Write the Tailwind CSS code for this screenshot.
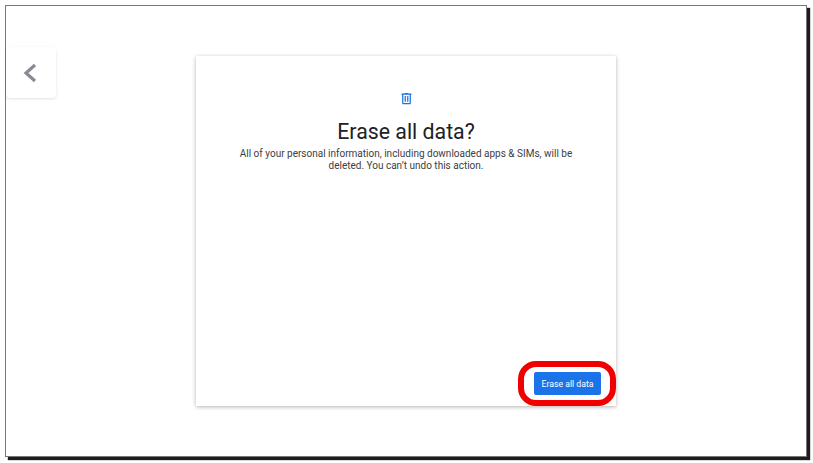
<!DOCTYPE html>
<html>
<head>
<meta charset="utf-8">
<script src="https://cdn.jsdelivr.net/npm/@tailwindcss/browser@4"></script>
</head>
<body class="bg-white w-[813px] h-[463px] overflow-hidden font-['Roboto',sans-serif]">
<div class="relative mt-[5px] ml-[5px] w-[802px] h-[452px] border border-[#777] bg-white shadow-[3px_3px_1px_#1c1c1c]">
  <div class="absolute left-0 top-[41px] w-[50px] h-[51px] bg-white rounded shadow-[0_1px_3px_rgba(0,0,0,0.12)] flex items-center justify-center">
    <svg class="w-[24px] h-[24px] -ml-[2px] text-[#888b94]" viewBox="0 0 24 24" fill="none" stroke="currentColor" stroke-width="3.2"><path d="M17 4 L8 12 L17 20"/></svg>
  </div>
  <div class="mt-[50px] ml-[190px] w-[420px] h-[350px] bg-white shadow-[0_1px_4px_rgba(0,0,0,0.3)] flex flex-col items-center relative">
    <svg class="mt-[35px] w-[15px] h-[15px] text-[#1a73e8]" viewBox="0 0 24 24" fill="currentColor"><path d="M15 4V3H9v1H4v2h1v13c0 1.1.9 2 2 2h10c1.1 0 2-.9 2-2V6h1V4h-5zm2 15H7V6h10v13zM9 8h2v9H9zm4 0h2v9h-2z"/></svg>
    <h1 class="mt-[13px] text-[21.3px] leading-[26px] text-[#202124] font-normal">Erase all data?</h1>
    <p class="mt-[3px] w-[360px] text-center text-[10px] leading-[12px] text-[#3c4043]">All of your personal information, including downloaded apps &amp; SIMs, will be deleted. You can’t undo this action.</p>
    <div class="mt-auto mb-[11px] self-end mr-[15px]">
      <button class="w-[67px] h-[23px] rounded-[2px] bg-[#1a73e8] text-white text-[8.7px] font-normal pt-[2px]">Erase all data</button>
    </div>
    <div class="absolute left-[322px] top-[305px] w-[98px] h-[45px] border-[6px] border-[#f00000] rounded-[18px]"></div>
  </div>
</div>
</body>
</html>
